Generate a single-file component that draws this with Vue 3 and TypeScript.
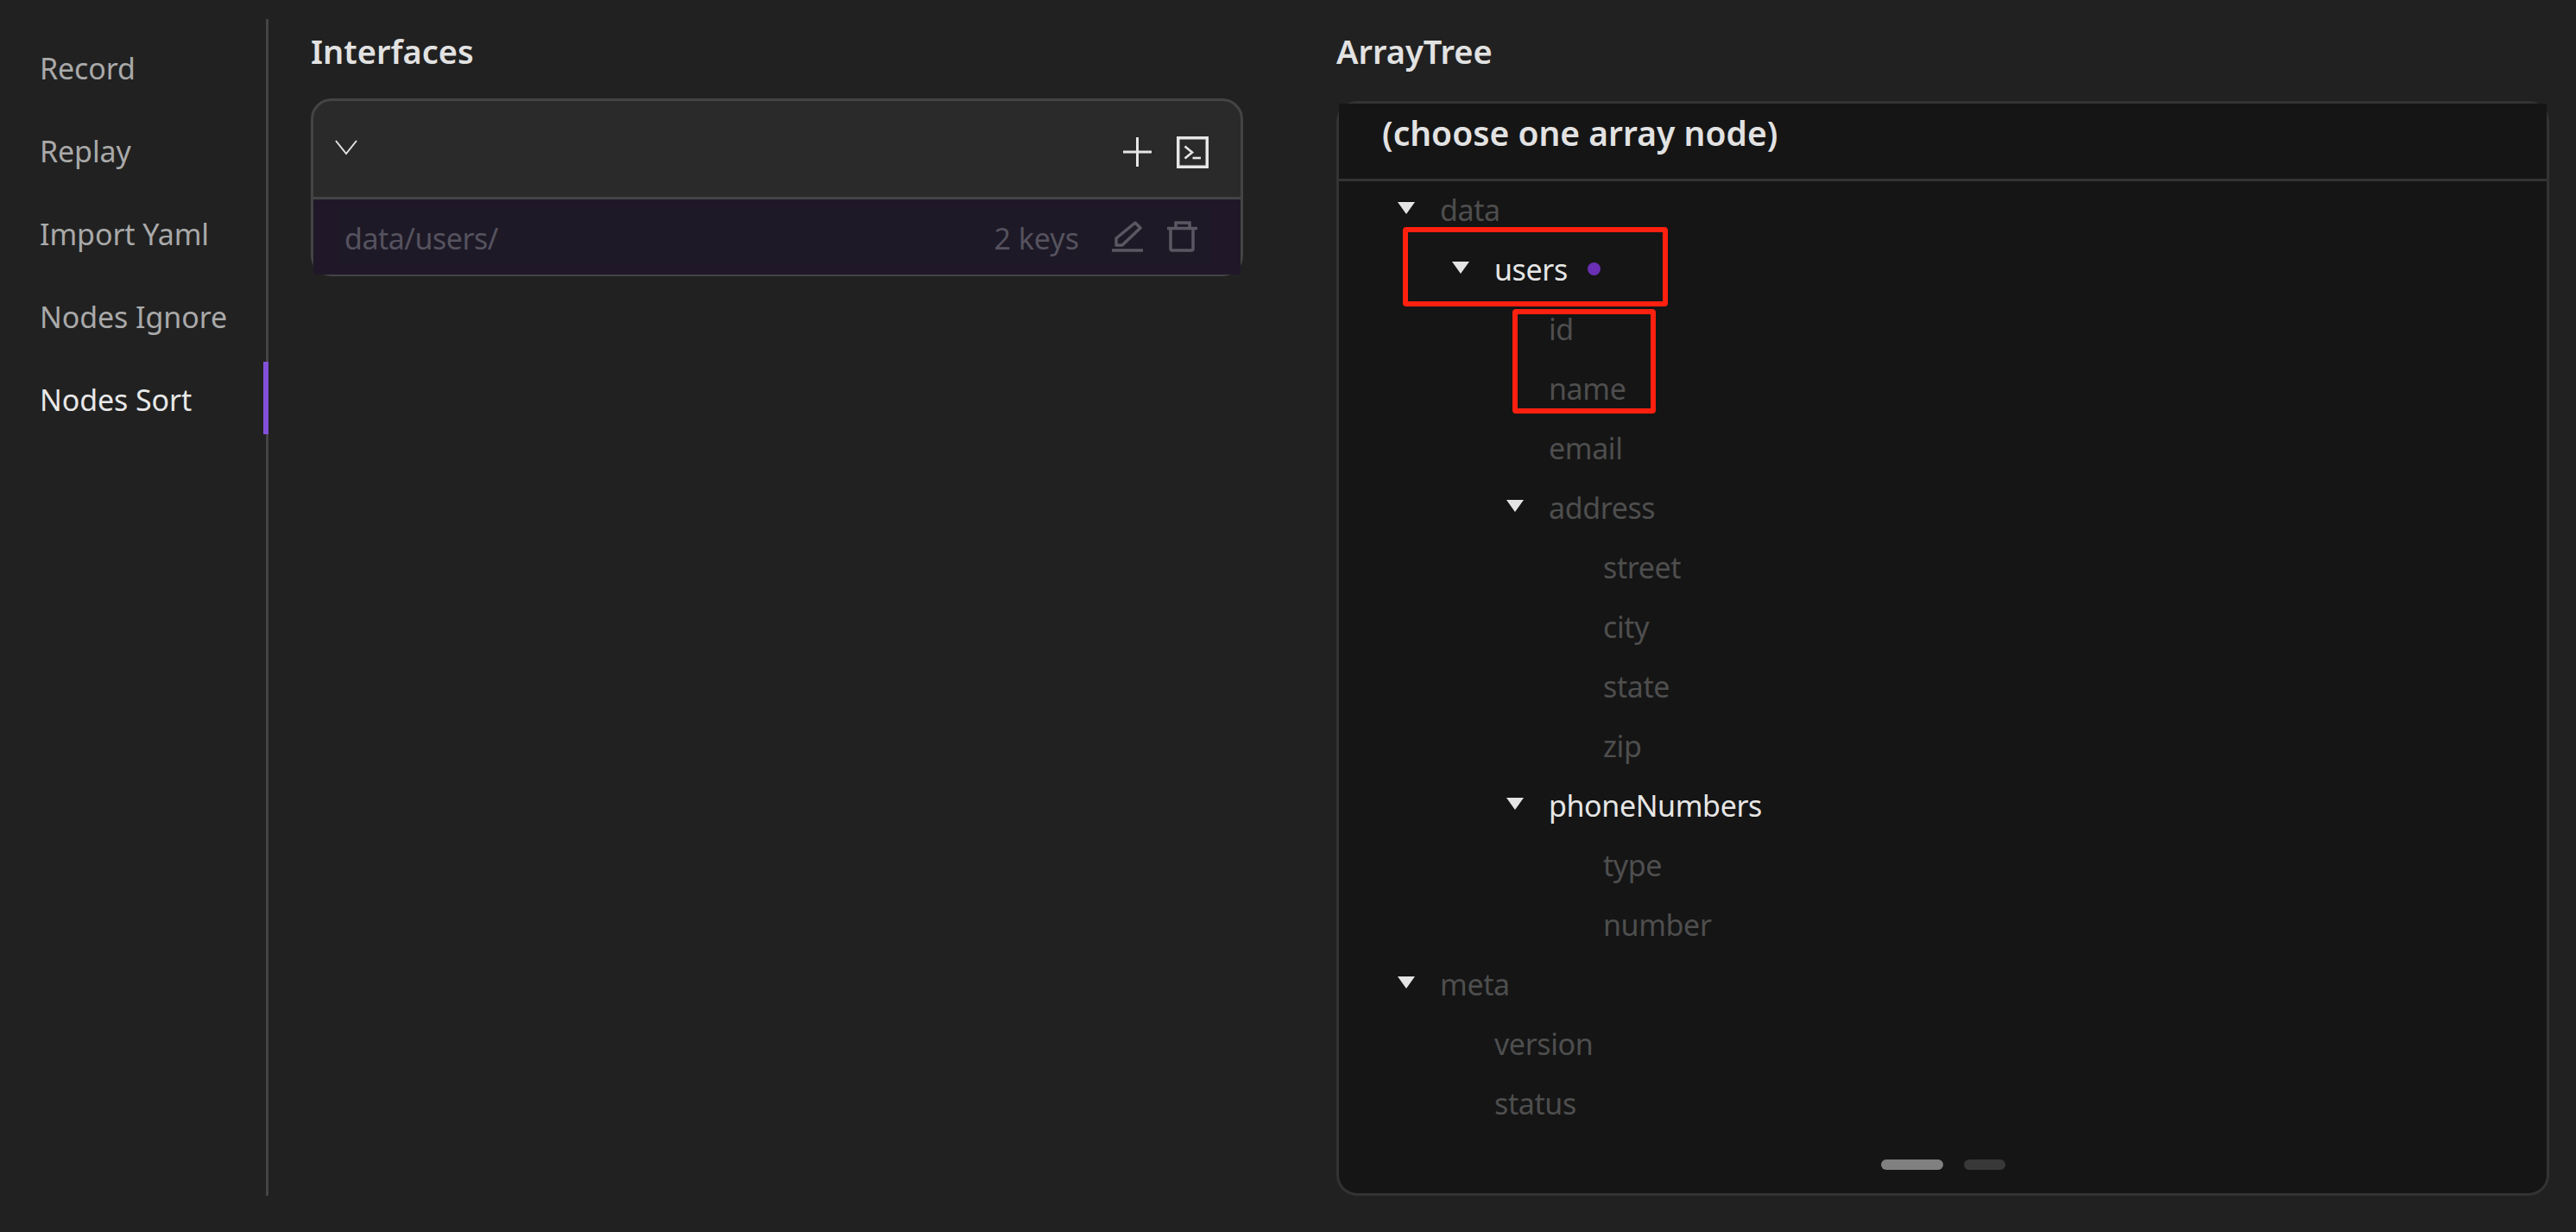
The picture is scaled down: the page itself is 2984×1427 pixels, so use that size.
<script setup lang="ts">
interface TreeRow {
  label: string;
  level: number;
  branch?: boolean;
  active?: boolean;
  dot?: boolean;
}

const navItems: string[] = ['Record', 'Replay', 'Import Yaml', 'Nodes Ignore', 'Nodes Sort'];
const activeNav = 'Nodes Sort';

const rows: TreeRow[] = [
  { label: 'data', level: 0, branch: true },
  { label: 'users', level: 1, branch: true, active: true, dot: true },
  { label: 'id', level: 2 },
  { label: 'name', level: 2 },
  { label: 'email', level: 2 },
  { label: 'address', level: 2, branch: true },
  { label: 'street', level: 3 },
  { label: 'city', level: 3 },
  { label: 'state', level: 3 },
  { label: 'zip', level: 3 },
  { label: 'phoneNumbers', level: 2, branch: true, active: true },
  { label: 'type', level: 3 },
  { label: 'number', level: 3 },
  { label: 'meta', level: 0, branch: true },
  { label: 'version', level: 1 },
  { label: 'status', level: 1 },
];

const indent = (level: number): string => `${68 + level * 63}px`;
</script>

<template>
  <div class="page">
    <nav class="sidebar">
      <div
        v-for="item in navItems"
        :key="item"
        class="nav-item"
        :class="{ current: item === activeNav }"
      >
        {{ item }}
      </div>
    </nav>

    <section class="col col-left">
      <h2 class="title title-left">Interfaces</h2>
      <div class="card">
        <div class="card-head">
          <svg class="chevron" width="26" height="18" viewBox="0 0 26 18">
            <path d="M1 1 L13 16 L25 1" fill="none" stroke="#e6e6e6" stroke-width="2" />
          </svg>
          <div class="head-actions">
            <svg width="33" height="34" viewBox="0 0 33 34">
              <path d="M0 17 H33 M16.5 0 V34" fill="none" stroke="#e6e6e6" stroke-width="3" />
            </svg>
            <svg width="37" height="37" viewBox="0 0 37 37">
              <rect x="1.75" y="1.75" width="33.5" height="33.5" fill="none" stroke="#e6e6e6" stroke-width="3.5" />
              <path d="M9.5 11.5 L18 18.5 L9.5 25.5" fill="none" stroke="#e6e6e6" stroke-width="2.6" />
              <path d="M18.5 25 H28" fill="none" stroke="#e6e6e6" stroke-width="2.6" />
            </svg>
          </div>
        </div>
        <div class="card-row">
          <div class="row-inner">
            <span class="path">data/users/</span>
            <span class="keys">2 keys</span>
            <svg class="pencil" width="36" height="36" viewBox="0 0 36 36">
              <path d="M5 28 V20 L27 2 L33 8 L12 28 Z" fill="none" stroke="#5a5763" stroke-width="3.5" stroke-linejoin="round" />
              <path d="M0 34 H36" fill="none" stroke="#5a5763" stroke-width="3.5" />
            </svg>
            <svg class="trash" width="36" height="36" viewBox="0 0 36 36">
              <path d="M0 8.5 H35 M10 8 V2 H26 V8 M4 8.5 V32 a2 2 0 0 0 2 2 H28 a2 2 0 0 0 2 -2 V8.5" fill="none" stroke="#5a5763" stroke-width="3.5" />
            </svg>
          </div>
        </div>
      </div>
    </section>

    <section class="col col-right">
      <h2 class="title title-right">ArrayTree</h2>
      <div class="tree-box">
        <div class="tree-head">(choose one array node)</div>
        <div class="tree-body">
          <div
            v-for="row in rows"
            :key="row.label"
            class="tree-row"
            :class="{ bright: row.active }"
            :style="{ paddingLeft: indent(row.level) }"
          >
            <span class="arrow-slot"><i v-if="row.branch" class="arrow"></i></span>
            <span>{{ row.label }}</span>
            <i v-if="row.dot" class="dot"></i>
          </div>
        </div>
        <div class="pager">
          <span class="pill pill-on"></span>
          <span class="pill pill-off"></span>
        </div>
        <div class="mark mark-users"></div>
        <div class="mark mark-keys"></div>
      </div>
    </section>
  </div>
</template>

<style scoped>
.page {
  display: flex;
  box-sizing: border-box;
  width: 2984px;
  height: 1427px;
  padding: 22px 31px 42px 0;
  background: #212121;
  font-family: "Noto Sans", "Open Sans", sans-serif;
  overflow: hidden;
}
.sidebar {
  flex: none;
  box-sizing: border-box;
  width: 311px;
  padding-top: 7px;
  border-right: 3px solid #444444;
}
.nav-item {
  position: relative;
  height: 96px;
  padding-left: 46px;
  font-size: 34px;
  letter-spacing: -0.1px;
  line-height: 101px;
  color: #a9a9a9;
}
.nav-item.current {
  color: #e8e8e8;
}
.nav-item.current::after {
  content: "";
  position: absolute;
  right: -3px;
  top: 6px;
  width: 6px;
  height: 84px;
  background: #8250d8;
}
.col {
  display: flex;
  flex-direction: column;
  flex: none;
}
.col-left {
  width: 1080px;
  margin-left: 49px;
}
.col-right {
  width: 1405px;
  margin-left: 108px;
}
.title {
  margin: 0;
  font-size: 38px;
  font-weight: 600;
  line-height: 74px;
  color: #e2e2e2;
}
.title-left {
  height: 92px;
}
.title-right {
  height: 95px;
}
.card {
  box-sizing: border-box;
  height: 206px;
  border: 3px solid #444444;
  border-radius: 24px;
  background: #2a2a2a;
}
.card-head {
  box-sizing: border-box;
  display: flex;
  align-items: center;
  justify-content: space-between;
  height: 114px;
  padding: 0 37px 0 25px;
  border-bottom: 3px solid #444444;
}
.chevron {
  display: block;
  margin-top: -3px;
}
.head-actions {
  display: flex;
  align-items: center;
  gap: 29px;
  margin-top: 7px;
}
.card-row {
  box-sizing: border-box;
  height: 87px;
  padding: 9px 36px 11px 29px;
  background: #201828;
}
.row-inner {
  display: flex;
  align-items: center;
  height: 67px;
  padding: 0 13px 0 9px;
  background: #1d1926;
  font-size: 34px;
  color: #55525e;
}
.path {
  flex: 1;
  margin-left: -2px;
  padding-top: 4px;
  letter-spacing: -0.5px;
}
.keys {
  margin-right: 38px;
  padding-top: 4px;
}
.pencil {
  margin-right: 28px;
}
.tree-box {
  position: relative;
  box-sizing: border-box;
  display: flex;
  flex-direction: column;
  flex: none;
  height: 1268px;
  border: 3px solid #333333;
  border-radius: 24px;
  background: #151515;
}
.tree-head {
  box-sizing: border-box;
  height: 90px;
  padding-left: 50px;
  border-bottom: 3px solid #333333;
  background: #151515;
  font-size: 39px;
  font-weight: 600;
  line-height: 68px;
  color: #e2e2e2;
}
.tree-body {
  margin-top: -2px;
}
.tree-row {
  display: flex;
  align-items: center;
  height: 69px;
  font-size: 34px;
  letter-spacing: -0.4px;
  color: #4e4e4e;
}
.tree-row.bright {
  color: #e6e6e6;
}
.arrow-slot {
  flex: none;
  width: 49px;
  margin-top: -3px;
}
.arrow {
  display: block;
  width: 0;
  height: 0;
  border-left: 10.5px solid transparent;
  border-right: 10.5px solid transparent;
  border-top: 14px solid #e4e4e4;
}
.dot {
  width: 15px;
  height: 15px;
  margin-left: 23px;
  border-radius: 50%;
  background: #6a2fb5;
}
.pager {
  display: flex;
  justify-content: center;
  gap: 24px;
  margin-top: auto;
  margin-bottom: 27px;
}
.pill {
  height: 12px;
  border-radius: 6px;
}
.pill-on {
  width: 72px;
  background: #808080;
}
.pill-off {
  width: 48px;
  background: #383838;
}
.mark {
  position: absolute;
  box-sizing: border-box;
  border: 6px solid #ff2010;
  border-radius: 4px;
}
.mark-users {
  left: 74px;
  top: 143px;
  width: 307px;
  height: 92px;
}
.mark-keys {
  left: 201px;
  top: 238px;
  width: 166px;
  height: 121px;
}
</style>

<style>
html,
body {
  margin: 0;
  background: #212121;
}
</style>
